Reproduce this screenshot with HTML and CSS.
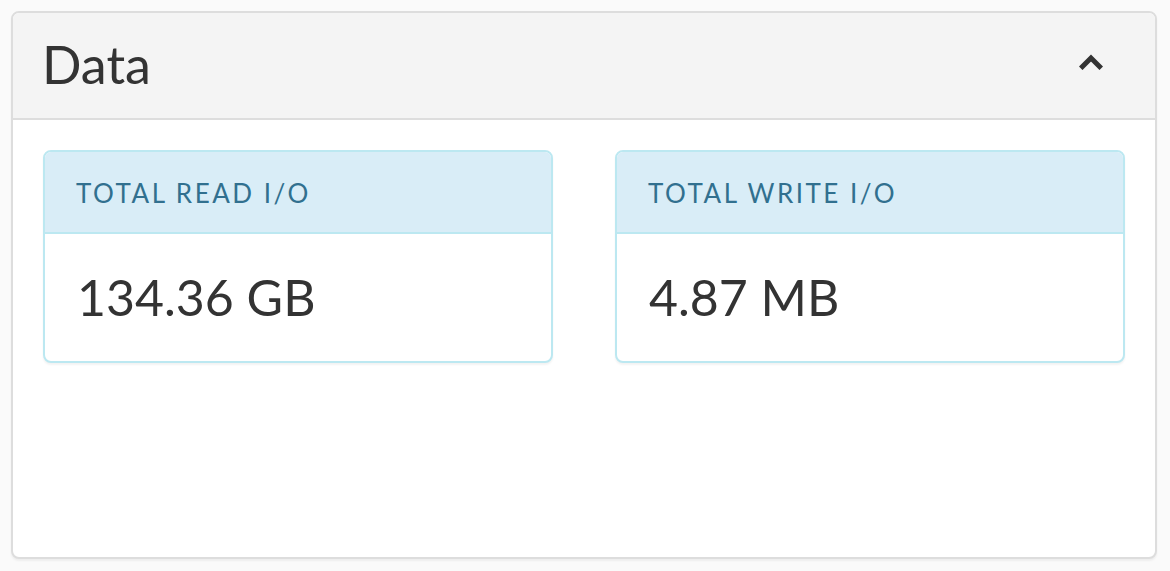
FILE: index.html
```html
<!DOCTYPE html>
<html>
<head>
<meta charset="utf-8">
<link rel="stylesheet" href="styles.css">
</head>
<body>
<div class="panel">
  <div class="panel-heading">
    <h2 class="panel-title">Data</h2>
    <svg class="chevron" width="24" height="16" viewBox="0 0 24 16"><path d="M3.5 12.5 L12 4 L20.5 12.5" fill="none" stroke="#333" stroke-width="5" stroke-linecap="square" stroke-linejoin="miter"/></svg>
  </div>
  <div class="panel-body">
    <div class="stat">
      <div class="stat-head">TOTAL READ I/O</div>
      <div class="stat-body">134.36 GB</div>
    </div>
    <div class="stat">
      <div class="stat-head">TOTAL WRITE I/O</div>
      <div class="stat-body">4.87 MB</div>
    </div>
  </div>
</div>
</body>
</html>
```

FILE: styles.css
```css
html, body {
  margin: 0;
  padding: 0;
  background: #fafafa;
  font-family: Lato, "Open Sans", sans-serif;
}
body {
  padding: 11px 13px 12px 11px;
}
.panel {
  height: 548px;
  box-sizing: border-box;
  border: 2px solid #dddddd;
  border-radius: 8px;
  background: #ffffff;
  box-shadow: 0 2px 2px rgba(0,0,0,0.05);
  overflow: hidden;
}
.panel-heading {
  height: 107px;
  box-sizing: border-box;
  background: #f4f4f4;
  border-bottom: 2px solid #dddddd;
  display: flex;
  align-items: center;
  justify-content: space-between;
  padding: 0 52px 0 29px;
}
.panel-title {
  margin: 0;
  font-size: 52px;
  font-weight: 400;
  color: #333333;
  letter-spacing: 0;
  line-height: 1;
  padding-bottom: 4px;
}
.chevron {
  display: block;
  margin-bottom: 8px;
}
.panel-body {
  display: grid;
  grid-template-columns: 510px 510px;
  column-gap: 62px;
  padding: 30px 30px;
  align-items: start;
}
.stat {
  border: 2px solid #bce8f1;
  border-radius: 8px;
  background: #ffffff;
  overflow: hidden;
  box-shadow: 0 2px 2px rgba(0,0,0,0.05);
}
.stat-head {
  height: 82px;
  box-sizing: border-box;
  background: #d9edf7;
  border-bottom: 2px solid #bce8f1;
  color: #31708f;
  font-size: 26px;
  letter-spacing: 2.5px;
  padding: 2px 0 0 31px;
  display: flex;
  align-items: center;
}
.stat-body {
  height: 127px;
  box-sizing: border-box;
  color: #333333;
  font-size: 50px;
  letter-spacing: 0;
  padding: 0 0 2px 32px;
  display: flex;
  align-items: center;
}
```
